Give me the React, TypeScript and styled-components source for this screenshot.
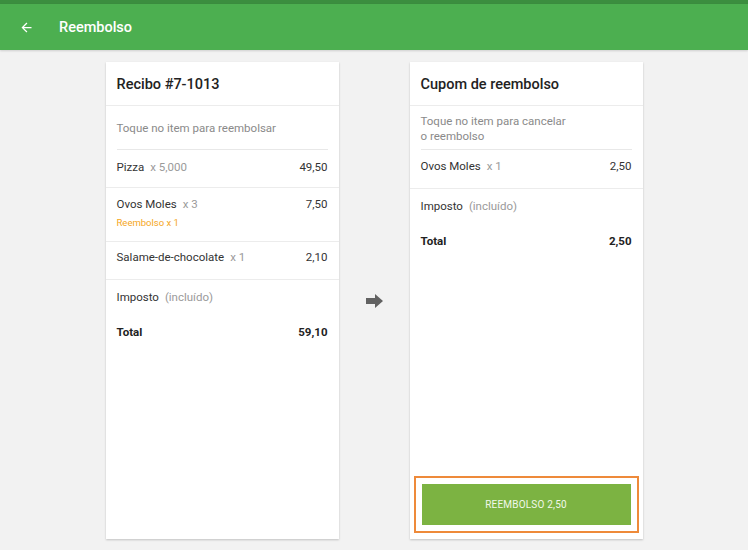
import * as React from 'react';
import styled, { createGlobalStyle } from 'styled-components';

const Global = createGlobalStyle`
  body {
    margin: 0;
    background: #f2f2f2;
    font-family: Roboto, "Liberation Sans", sans-serif;
    color: #333;
  }
`;

const Page = styled.div`
  width: 748px;
  height: 550px;
  overflow: hidden;
  background: #f2f2f2;
`;

const StatusStrip = styled.div`
  height: 4px;
  background: #3b8e3f;
`;

const AppBar = styled.header`
  height: 46px;
  background: #4caf50;
  display: flex;
  align-items: center;
  padding-left: 19px;
  gap: 25px;
  box-shadow: 0 1px 2px rgba(0, 0, 0, 0.15);
  color: #fff;
`;

const Title = styled.h1`
  margin: 0;
  font-size: 14.5px;
  font-weight: 500;
`;

const Main = styled.main`
  display: flex;
  justify-content: center;
  padding-top: 12px;
`;

const Card = styled.section`
  width: 233px;
  height: 477px;
  background: #fff;
  box-shadow: 0 1px 2px rgba(0, 0, 0, 0.2);
  display: flex;
  flex-direction: column;
`;

const CardHeader = styled.h2`
  margin: 0;
  height: 44px;
  box-sizing: border-box;
  display: flex;
  align-items: center;
  padding: 2px 11px 0;
  font-size: 14.5px;
  font-weight: 500;
  color: #222;
  border-bottom: 1px solid #ececec;
`;

const Hint = styled.div<{ $twoLines?: boolean }>`
  margin: 0 11px;
  height: 44px;
  box-sizing: border-box;
  padding-top: ${p => (p.$twoLines ? '2px' : '1px')};
  display: flex;
  align-items: center;
  font-size: 11.5px;
  line-height: 15px;
  color: #8a8a8a;
  border-bottom: 1px solid #e8e8e8;
`;

const Row = styled.div<{ $pad: string; $border?: boolean }>`
  padding: ${p => p.$pad};
  border-bottom: ${p => (p.$border ? '1px solid #ececec' : 'none')};
`;

const Line = styled.div`
  display: flex;
  justify-content: space-between;
  align-items: center;
  font-size: 11.5px;
  line-height: 14px;
  color: #333;
`;

const Qty = styled.span`
  color: #9a9a9a;
  margin-left: 6px;
`;

const Strong = styled.span`
  font-weight: 700;
  color: #222;
`;

const Refund = styled.div`
  margin-top: 6px;
  font-size: 9.5px;
  line-height: 12px;
  color: #f5a623;
`;

const ArrowColumn = styled.div`
  width: 71px;
  display: flex;
  align-items: center;
  justify-content: center;
`;

const Highlight = styled.div`
  margin: auto 4px 6px;
  border: 2px solid #ee8a3a;
  padding: 6px;
`;

const Button = styled.button`
  width: 100%;
  height: 41px;
  border: none;
  background: #7cb342;
  color: #f1f8e9;
  font-family: Roboto, "Liberation Sans", sans-serif;
  font-size: 10px;
  letter-spacing: 0.2px;
`;

const BackArrow = () => (
  <svg width="15" height="15" viewBox="0 0 24 24" fill="#fff">
    <path d="M20 11H7.83l5.59-5.59L12 4l-8 8 8 8 1.41-1.41L7.83 13H20v-2z" />
  </svg>
);

const RightArrow = () => (
  <svg width="17" height="14" viewBox="0 0 17 14" fill="#626262">
    <path d="M0 4h9V0l8 7-8 7v-4H0z" />
  </svg>
);

export default function App() {
  return (
    <Page>
      <Global />
      <StatusStrip />
      <AppBar>
        <BackArrow />
        <Title>Reembolso</Title>
      </AppBar>
      <Main>
        <Card>
          <CardHeader>Recibo #7-1013</CardHeader>
          <Hint>Toque no item para reembolsar</Hint>
          <Row $pad="10px 11px 13px" $border>
            <Line>
              <span>Pizza<Qty>x 5,000</Qty></span>
              <span>49,50</span>
            </Line>
          </Row>
          <Row $pad="9px 11px 12px" $border>
            <Line>
              <span>Ovos Moles<Qty>x 3</Qty></span>
              <span>7,50</span>
            </Line>
            <Refund>Reembolso x 1</Refund>
          </Row>
          <Row $pad="8px 11px 15px" $border>
            <Line>
              <span>Salame-de-chocolate<Qty>x 1</Qty></span>
              <span>2,10</span>
            </Line>
          </Row>
          <Row $pad="10px 11px 11px">
            <Line>
              <span>Imposto<Qty>(incluído)</Qty></span>
            </Line>
          </Row>
          <Row $pad="10px 11px">
            <Line>
              <Strong>Total</Strong>
              <Strong>59,10</Strong>
            </Line>
          </Row>
        </Card>
        <ArrowColumn>
          <RightArrow />
        </ArrowColumn>
        <Card>
          <CardHeader>Cupom de reembolso</CardHeader>
          <Hint $twoLines>
            Toque no item para cancelar
            <br />
            o reembolso
          </Hint>
          <Row $pad="9px 11px 15px" $border>
            <Line>
              <span>Ovos Moles<Qty>x 1</Qty></span>
              <span>2,50</span>
            </Line>
          </Row>
          <Row $pad="10px 11px 11px">
            <Line>
              <span>Imposto<Qty>(incluído)</Qty></span>
            </Line>
          </Row>
          <Row $pad="10px 11px">
            <Line>
              <Strong>Total</Strong>
              <Strong>2,50</Strong>
            </Line>
          </Row>
          <Highlight>
            <Button>REEMBOLSO 2,50</Button>
          </Highlight>
        </Card>
      </Main>
    </Page>
  );
}
